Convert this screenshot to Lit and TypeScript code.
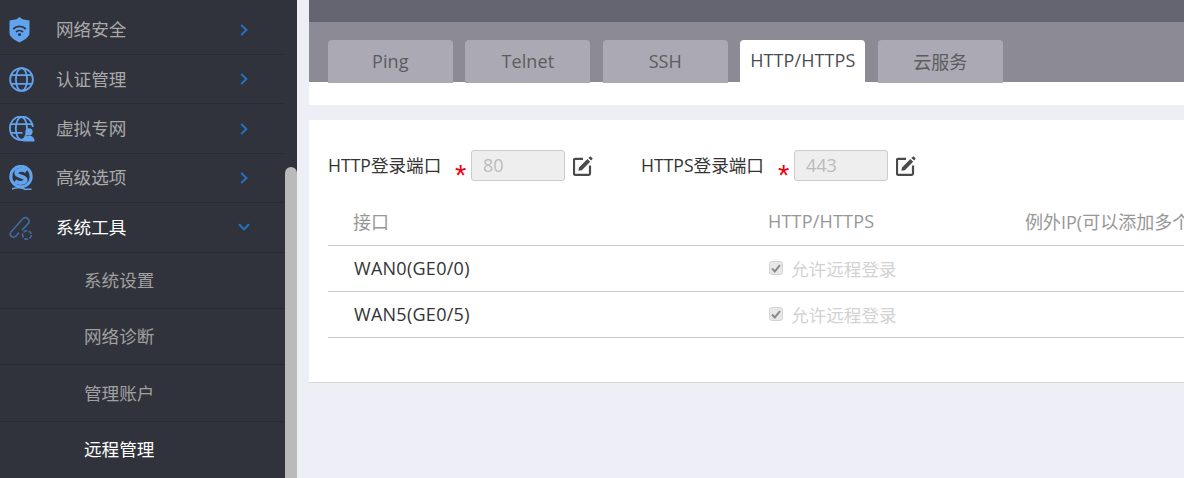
import { LitElement, html, css, svg } from "lit";
import { customElement } from "lit/decorators.js";

const shield = svg`<path fill="#62a3ee" d="M10.5 0 L13.5 2.2 L20.5 3.5 V16 C20.5 20 15.5 23 10.5 25.5 C5.5 23 .5 20 .5 16 V3.5 L7.5 2.2 Z"/><g fill="none" stroke="#30333c" stroke-width="1.8"><path d="M4.3 12 C7.7 8.6 13.3 8.6 16.7 12"/><path d="M7 15 C9 13.2 12 13.2 14 15"/></g><circle cx="10.5" cy="17.6" r="1.5" fill="#30333c"/>`;
const globe = svg`<g fill="none" stroke="#62a3ee" stroke-width="1.8"><circle cx="12.5" cy="12.5" r="11.4"/><ellipse cx="12.5" cy="12.5" rx="5.6" ry="11.4"/><path d="M2.4 8.2 H22.6 M2.4 16.8 H22.6"/></g>`;
const vpn = svg`<g fill="none" stroke="#62a3ee" stroke-width="1.8"><path d="M15 24 C6 25 1 19 1 12.5 A11.4 11.4 0 0 1 23.8 11"/><ellipse cx="12.4" cy="12.5" rx="5.6" ry="11.4"/><path d="M2 8.2 H23 M2 16.8 H13.5"/></g><circle cx="20" cy="15.8" r="3.6" fill="#62a3ee"/><path fill="#62a3ee" d="M14.2 25.4 C14.2 21.8 17 20.2 18.5 19.8 H21.5 C23 20.2 25.6 21.8 25.6 25.4 Z"/>`;
const sIcon = svg`<g fill="none" stroke="#62a3ee"><circle cx="12" cy="11.5" r="10.2" stroke-width="3"/><path stroke-width="4" d="M17.2 6.4 C13.4 3.6 7 4.8 7.4 8.4 C7.8 11.8 16.6 11 16.6 14.8 C16.6 18.2 9.6 19 6 16.2"/><path stroke-width="1.6" d="M3 24 C8 22 14 22.6 16 24.4 H22.5"/></g>`;
const tool = svg`<g fill="none" stroke="#3f6a9c" stroke-width="1.7"><path d="M1.5 17.5 L13.5 4 C15 2.5 17 2.2 19 3.8 C20.5 5.2 20.5 7.2 19 8.8 L13 15.2"/><path d="M1.5 17.5 C0.8 19 1.5 21 3 21.8 C4.6 22.6 6 22 7 21 L10 17.5"/><circle cx="18" cy="20" r="4.3" stroke-dasharray="4 1.3"/></g>`;

const chevR = html`<svg width="8" height="12" viewBox="0 0 8 12"><path d="M1.2 1 L6.4 6 L1.2 11" fill="none" stroke="#2272c3" stroke-width="2"/></svg>`;
const chevD = html`<svg width="12" height="8" viewBox="0 0 12 8"><path d="M1 1.2 L6 6.4 L11 1.2" fill="none" stroke="#2272c3" stroke-width="2"/></svg>`;
const editIcon = html`<svg class="edit" width="20" height="20" viewBox="0 0 20 20"><path d="M10 2.8 H2.2 A1.2 1.2 0 0 0 1 4 V17.6 A1.2 1.2 0 0 0 2.2 18.8 H15.8 A1.2 1.2 0 0 0 17 17.6 V9.6" fill="none" stroke="#4a4a4a" stroke-width="2.2"/><path d="M6 11.4 L14.4 3 L17.2 5.8 L8.8 14.2 L5.4 14.8 Z M15.4 2 L16.8 .7 C17.2 .4 17.6 .4 18 .7 L19.3 2 C19.6 2.4 19.6 2.8 19.3 3.2 L18.2 4.6 Z" fill="#4a4a4a"/></svg>`;

const navItems = [
  { label: "网络安全", icon: shield, w: 21, h: 26 },
  { label: "认证管理", icon: globe, w: 25, h: 25 },
  { label: "虚拟专网", icon: vpn, w: 26, h: 26 },
  { label: "高级选项", icon: sIcon, w: 25, h: 25 },
];
const subItems = ["系统设置", "网络诊断", "管理账户"];
const tabs = ["Ping", "Telnet", "SSH", "HTTP/HTTPS", "云服务"];
const rows = ["WAN0(GE0/0)", "WAN5(GE0/5)"];

@customElement("app-root")
export class AppRoot extends LitElement {
  static styles = css`
    :host {
      display: grid;
      grid-template-columns: 297px 1fr;
      width: 1184px;
      height: 478px;
      overflow: hidden;
      background: #eeeef7;
      font-family: "Open Sans", "Noto Sans CJK SC", sans-serif;
      font-size: 18px;
    }
    .side {
      display: grid;
      grid-template-columns: 285px 12px;
      background: #30333c;
      height: 478px;
      overflow: hidden;
      font-size: 17.6px;
    }
    .nav { padding-top: 5.6px; }
    .row {
      box-sizing: border-box;
      height: 49.4px;
      display: grid;
      grid-template-columns: 56px 1fr 20px;
      align-items: center;
      border-bottom: 1px solid #2a2c34;
      color: #a9a9a9;
      padding-right: 32px;
    }
    .row.open { color: #fff; }
    .text { padding-bottom: 2px; }
    .ico { padding-left: 9px; display: flex; }
    .chev { display: flex; justify-content: center; padding-left: 1px; }
    .sub {
      box-sizing: border-box;
      height: 56.4px;
      display: flex;
      align-items: center;
      padding: 0 0 2px 84px;
      border-bottom: 1px solid #2a2c34;
      color: #a0a0a0;
    }
    .sub.active { color: #fff; border-bottom: 0; }
    .track { padding-top: 167px; }
    .thumb { height: 311px; background: #bababa; border-radius: 6px 6px 0 0; }
    .main { padding-left: 12px; overflow: hidden; }
    .strip { height: 22px; background: #646570; }
    .tabbar {
      height: 60px;
      box-sizing: border-box;
      background: #8c8a94;
      padding: 18px 0 0 18.8px;
      display: flex;
      gap: 12.5px;
    }
    .tab {
      box-sizing: border-box;
      width: 125px;
      height: 43px;
      background: #aba9b3;
      color: #5c5c60;
      border-radius: 4px 4px 0 0;
      display: flex;
      align-items: center;
      justify-content: center;
      padding-bottom: 2px;
      letter-spacing: .1px;
    }
    .tab.active { background: #fff; height: 42px; color: #4c4c50; }
    .white { height: 23px; background: #fff; }
    .panel {
      margin-top: 15px;
      height: 263px;
      box-sizing: border-box;
      background: #fff;
      border-bottom: 1px solid #d8d8d8;
      padding: 30px 0 0 19px;
      overflow: hidden;
    }
    .form { display: flex; align-items: center; height: 31px; color: #333; }
    .label { white-space: nowrap; width: 127px; padding-bottom: 3px; font-size: 17.6px; }
    .f2 { margin-left: 48px; }
    .f2 .label { width: 137px; }
    .field { display: flex; align-items: center; }
    .star { color: #f00010; width: 16px; font-size: 29px; line-height: 31px; padding-top: 10px; box-sizing: border-box; height: 31px; font-family: "Liberation Sans", sans-serif; }
    .input {
      box-sizing: border-box;
      width: 94px;
      height: 31px;
      background: #eee;
      border: 1px solid #ccc;
      border-radius: 3px;
      color: #bbb;
      padding-left: 11px;
      line-height: 28px;
    }
    .edit { margin-left: 8px; display: block; }
    .table { margin-top: 19px; width: 856px; overflow: hidden; }
    .tr {
      display: grid;
      grid-template-columns: 440px 257px 1fr;
      align-items: center;
      border-bottom: 1px solid #ccc;
      height: 46px;
      box-sizing: border-box;
      white-space: nowrap;
    }
    .th { color: #979797; height: 45.5px; padding-bottom: 2px; }
    .th span:first-child { padding-left: 25px; }
    .latin { letter-spacing: .2px; }
    .name { padding-left: 26px; color: #333; letter-spacing: .27px; }
    .chk { display: flex; align-items: center; gap: 8px; color: #d2d2d2; padding-left: 1px; font-size: 17.6px; }
    .box {
      box-sizing: border-box;
      width: 14px;
      height: 14px;
      background: #e8e8e8;
      border: 1px solid #d4d4d4;
      border-radius: 3px;
      display: flex;
      align-items: center;
      justify-content: center;
    }
  `;

  render() {
    return html`
      <aside class="side">
        <nav class="nav">
          ${navItems.map(
            (n) => html`<div class="row">
              <span class="ico"><svg width=${n.w} height=${n.h} viewBox="0 0 ${n.w} ${n.h}">${n.icon}</svg></span>
              <span class="text">${n.label}</span>
              <span class="chev">${chevR}</span>
            </div>`
          )}
          <div class="row open">
            <span class="ico"><svg width="25" height="25" viewBox="0 0 25 25">${tool}</svg></span>
            <span class="text">系统工具</span>
            <span class="chev">${chevD}</span>
          </div>
          ${subItems.map((s) => html`<div class="sub">${s}</div>`)}
          <div class="sub active">远程管理</div>
        </nav>
        <div class="track"><div class="thumb"></div></div>
      </aside>
      <main class="main">
        <div class="strip"></div>
        <div class="tabbar">
          ${tabs.map((t) => html`<div class="tab ${t === "HTTP/HTTPS" ? "active" : ""}">${t}</div>`)}
        </div>
        <div class="white"></div>
        <section class="panel">
          <div class="form">
            <div class="field">
              <span class="label">HTTP登录端口</span><span class="star">*</span>
              <span class="input">80</span>${editIcon}
            </div>
            <div class="field f2">
              <span class="label">HTTPS登录端口</span><span class="star">*</span>
              <span class="input">443</span>${editIcon}
            </div>
          </div>
          <div class="table">
            <div class="tr th"><span>接口</span><span class="latin">HTTP/HTTPS</span><span>例外IP(可以添加多个</span></div>
            ${rows.map(
              (r) => html`<div class="tr">
                <span class="name">${r}</span>
                <span class="chk"><span class="box"><svg width="10" height="9" viewBox="0 0 10 9"><path d="M1 4.5 L3.8 7.4 L9 1.2" fill="none" stroke="#8a8a8a" stroke-width="2"/></svg></span>允许远程登录</span>
                <span></span>
              </div>`
            )}
          </div>
        </section>
      </main>
    `;
  }
}
